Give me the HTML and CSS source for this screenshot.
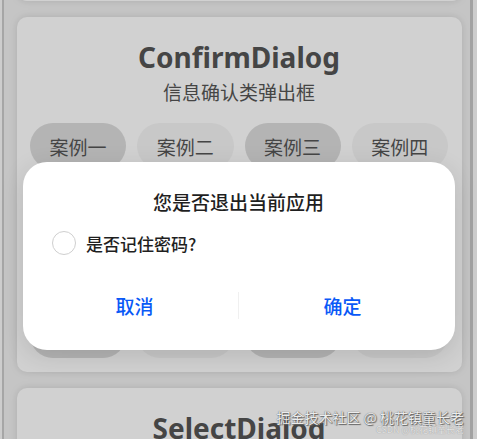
FILE: index.html
```html
<!DOCTYPE html>
<html lang="zh-CN">
<head>
<meta charset="utf-8">
<title>弹出框示例</title>
<link rel="stylesheet" href="styles.css">
</head>
<body>
  <div class="screen">
    <div class="list">
      <section class="card card-prev"></section>

      <section class="card">
        <h2 class="card-title">ConfirmDialog</h2>
        <p class="card-sub">信息确认类弹出框</p>
        <div class="cases">
          <button class="case case-dark">案例一</button>
          <button class="case">案例二</button>
          <button class="case case-dark">案例三</button>
          <button class="case">案例四</button>
          <button class="case case-dark">案例五</button>
          <button class="case">案例六</button>
          <button class="case case-dark">案例七</button>
          <button class="case">案例八</button>
          <button class="case case-dark">案例九</button>
          <button class="case">案例十</button>
          <button class="case case-dark">案例十一</button>
          <button class="case">案例十二</button>
          <button class="case case-dark">案例十三</button>
          <button class="case">案例十四</button>
          <button class="case case-dark">案例十五</button>
          <button class="case">案例十六</button>
        </div>
      </section>

      <section class="card">
        <h2 class="card-title">SelectDialog</h2>
        <p class="card-sub">选择类弹出框</p>
      </section>
    </div>
  </div>

  <div class="mask"></div>

  <div class="dialog" role="dialog">
    <h3 class="dialog-title">您是否退出当前应用</h3>
    <label class="dialog-check">
      <span class="check-circle"></span>
      <span class="check-text">是否记住密码?</span>
    </label>
    <div class="dialog-actions">
      <button class="action">取消</button>
      <span class="action-divider"></span>
      <button class="action">确定</button>
    </div>
  </div>

  <div class="watermark">
    <div class="wm-main">掘金技术社区 @ 桃花镇童长老</div>
    <div class="wm-sub">CSDN @桃花镇童长老</div>
  </div>
</body>
</html>
```

FILE: styles.css
```css
* {
  box-sizing: border-box;
}

html,
body {
  margin: 0;
  height: 439px;
}

body {
  position: relative;
  overflow: hidden;
  background: #fbfbfb;
  font-family: "Noto Sans CJK SC", "Noto Sans", sans-serif;
}

/* phone screen with its thin frame edges */
.screen {
  height: 439px;
  margin: 0 4px 0 2px;
  border-left: 2px solid #cbcbcb;
  border-right: 3px solid #c6c6c6;
  padding: 0 8px 0 13px;
  background: #f1f1f1;
  overflow: hidden;
}

.list {
  display: flex;
  flex-direction: column;
  gap: 16px;
  margin-top: -119px;
}

.card {
  background: #ffffff;
  border-radius: 10px;
  box-shadow: 0 0 8px rgba(0, 0, 0, 0.12);
  padding: 22px 14px 14px 13px;
  display: flex;
  flex-direction: column;
  align-items: center;
}

.card-prev {
  height: 120px;
}

.card-title {
  margin: 0;
  font-family: "Noto Sans", "Noto Sans CJK SC", sans-serif;
  font-weight: 700;
  font-size: 28px;
  line-height: 36px;
  color: #555555;
}

.card-sub {
  margin: 4px 0 0;
  font-size: 19px;
  line-height: 26px;
  color: #555555;
}

.cases {
  align-self: stretch;
  margin-top: 18px;
  display: grid;
  grid-template-columns: repeat(4, 1fr);
  gap: 17px 11px;
}

.case {
  height: 46px;
  border: 0;
  border-radius: 23px;
  background: #f5f5f5;
  font-family: "Noto Sans CJK SC", sans-serif;
  font-size: 19px;
  color: #555555;
  padding: 0;
}

.case-dark {
  background: #dcdcdc;
}

/* dim layer under the dialog */
.mask {
  position: absolute;
  inset: 0;
  background: rgba(0, 0, 0, 0.18);
}

.dialog {
  position: absolute;
  left: 23px;
  top: 162px;
  width: 432px;
  height: 188px;
  background: #ffffff;
  border-radius: 24px;
  padding: 26px 9px 25px 8px;
  box-shadow: 0 6px 24px rgba(0, 0, 0, 0.12);
  display: flex;
  flex-direction: column;
}

.dialog-title {
  margin: 0;
  text-align: center;
  font-size: 19px;
  line-height: 28px;
  font-weight: 500;
  color: #1f1f1f;
}

.dialog-check {
  margin-top: 15px;
  padding-left: 21px;
  display: flex;
  align-items: center;
  gap: 10px;
  height: 24px;
}

.check-circle {
  width: 24px;
  height: 24px;
  border-radius: 50%;
  border: 1.5px solid #cfcfcf;
  flex: none;
}

.check-text {
  font-size: 17px;
  font-weight: 500;
  color: #1f1f1f;
}

.dialog-actions {
  margin-top: 30px;
  height: 40px;
  display: flex;
  align-items: center;
}

.action {
  flex: 1;
  height: 40px;
  border: 0;
  background: transparent;
  font-family: "Noto Sans CJK SC", sans-serif;
  font-size: 19px;
  font-weight: 500;
  color: #0a59f7;
  padding: 0;
}

.action-divider {
  width: 1px;
  height: 27px;
  background: #f0f0f0;
}

/* site watermark stamped on top */
.watermark {
  position: absolute;
  right: 13px;
  top: 409px;
  text-align: right;
  color: #ececec;
  text-shadow: 0 0 1px #444, 1px 1px 1px #666;
}

.wm-main {
  font-size: 14px;
  line-height: 17px;
}

.wm-sub {
  font-size: 9px;
  line-height: 10px;
  margin-top: -1px;
  color: #e4e4e4;
  text-shadow: 0 0 1px #888;
}
```
